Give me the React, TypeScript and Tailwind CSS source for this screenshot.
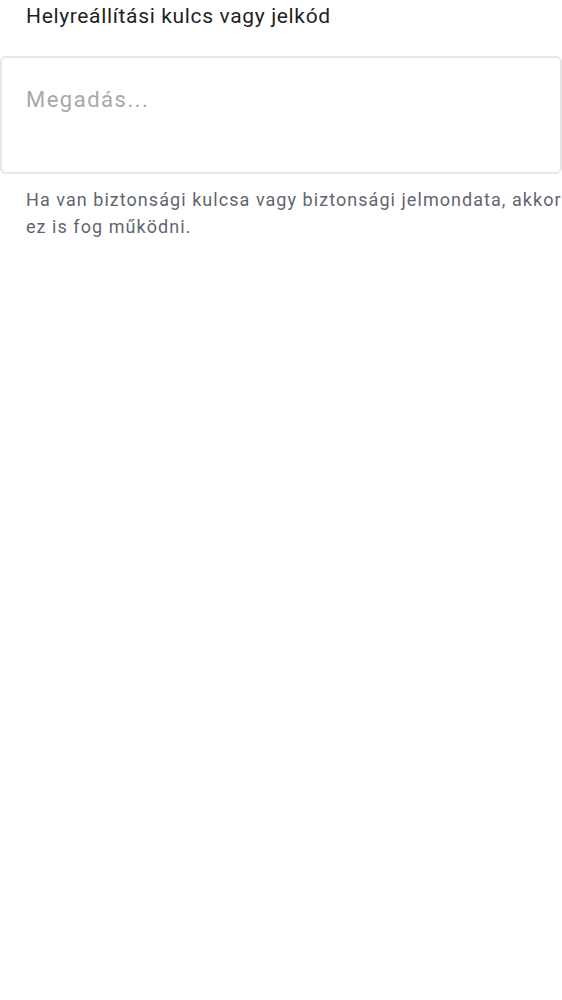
import React from "react";

export default function App() {
  return (
    <div className="bg-white min-h-screen" style={{ fontFamily: "Roboto, sans-serif" }}>
      <div className="px-[26px] pt-[2px] text-[21px] leading-[28px] tracking-[0.65px] text-[#1f1f1f]">
        Helyreállítási kulcs vagy jelkód
      </div>
      <div className="mt-[26px] h-[118px] w-[562px] rounded-[6px] border-2 border-[#e6e6e6] px-[24px] pt-[27px]">
        <div className="text-[22px] leading-[30px] tracking-[1.5px] text-[#a8a8a8]">Megadás...</div>
      </div>
      <div className="mt-[12px] pl-[26px] text-[18px] leading-[27px] tracking-[1.05px] text-[#5f6670] whitespace-nowrap">
        Ha van biztonsági kulcsa vagy biztonsági jelmondata, akkor
        <br />
        ez is fog működni.
      </div>
    </div>
  );
}
